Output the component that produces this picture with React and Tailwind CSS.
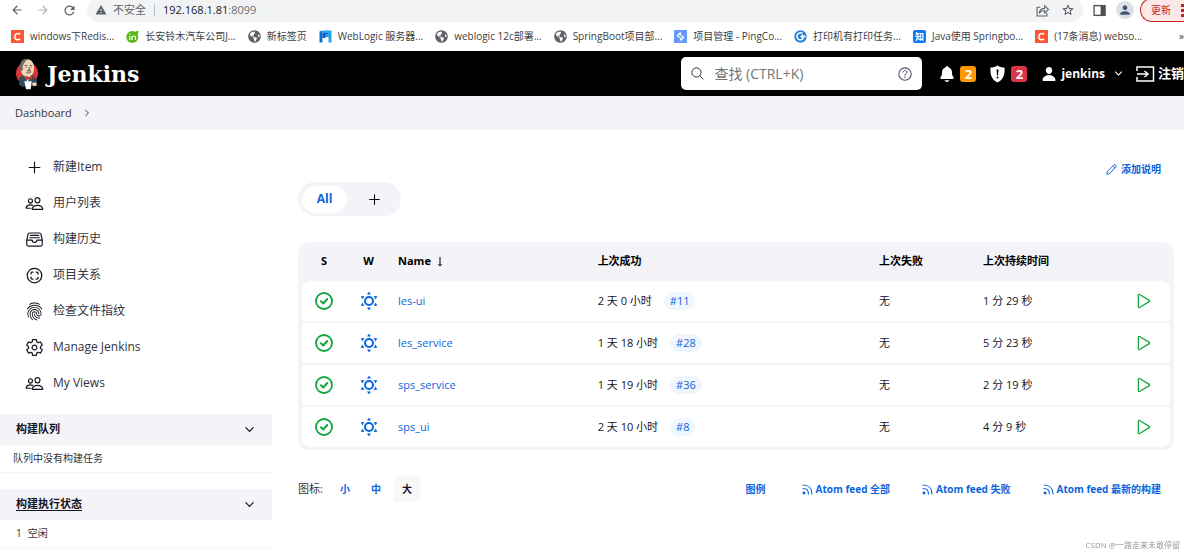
import React from 'react';
import {
  IoSearchOutline,
  IoHelpCircleOutline,
  IoNotifications,
  IoPerson,
  IoPeopleOutline,
  IoFileTrayFullOutline,
  IoFingerPrintOutline,
  IoSettingsOutline,
  IoPlayOutline,
  IoAddOutline,
  IoChevronDownOutline,
  IoChevronForwardOutline
} from 'react-icons/io5';
import {
  MdArrowBack,
  MdArrowForward,
  MdRefresh,
  MdWarning,
  MdStarBorder,
  MdPerson
} from 'react-icons/md';
import { FaGlobeAmericas } from 'react-icons/fa';

const CsdnIcon = () => (
  <svg viewBox="0 0 26 26" className="w-[13px] h-[13px] shrink-0">
    <rect width="26" height="26" fill="#fc5531" />
    <path d="M18.5 8.5C14 5.5 8 7.500 7.500 13.500s5 7.500 10.500 4.500" fill="none" stroke="#fff" strokeWidth="3" />
  </svg>
);

const GreenIcon = () => (
  <svg viewBox="0 0 26 26" className="w-[13px] h-[13px] shrink-0">
    <circle cx="12.500" cy="14" r="12" fill="#5cb81c" />
    <path d="M17 5Q20 2 25 1q1 5-3 9z" fill="#5cb81c" />
    <path d="M7.500 12v8M7.500 7.500v2M12 20v-8M12 15q1-3 4-3t3 3v5" fill="none" stroke="#fff" strokeWidth="2.400" />
  </svg>
);

const GlobeIcon = () => <FaGlobeAmericas className="w-[13px] h-[13px] shrink-0 text-[#5f6368]" />;

const FlagIcon = () => (
  <svg viewBox="0 0 26 26" className="w-[13px] h-[13px] shrink-0">
    <path d="M1 3l6-2v24H1z" fill="#1170cf" />
    <path d="M7 1h18v24h-6V14h-8V9h8V6H7z" fill="#21a7f0" />
    <path d="M7 6h12v3h-6v7H7z" fill="#0d5fc0" />
  </svg>
);

const PingIcon = () => (
  <svg viewBox="0 0 26 26" className="w-[13px] h-[13px] shrink-0">
    <rect width="26" height="26" rx="1" fill="#6698ff" />
    <path d="M13 5l-6 6 4 4M13 21l6-6-4-4M13 5v6M13 15v6" fill="none" stroke="#fff" strokeWidth="2.500" />
  </svg>
);

const PrintIcon = () => (
  <svg viewBox="0 0 26 26" className="w-[13px] h-[13px] shrink-0">
    <circle cx="13" cy="13" r="12.500" fill="#2b7fd8" />
    <path d="M17 7a7 7 0 1 0 2 9" fill="none" stroke="#fff" strokeWidth="3" />
    <path d="M12 13l6-5v3h5v4h-5v3z" fill="#fff" />
  </svg>
);

const ZhihuIcon = () => (
  <span className="w-[13px] h-[13px] shrink-0 rounded-xs bg-[#0e77fa] text-white text-[9px] leading-[13px] text-center font-bold">知</span>
);

const JenkinsLogo = () => (
  <svg viewBox="0 0 72 96" className="w-6 h-8 shrink-0">
    <ellipse cx="36" cy="46" rx="33" ry="34" fill="#d33833" />
    <path d="M14 58l14-6h22l14 8 3 18-12 6-34 2-9-6z" fill="#335061" />
    <path d="M28 50l9 22 12-20z" fill="#fff" />
    <path d="M18 24C14 44 24 56 38 56s20-12 19-28C56 12 48 4 36 4S20 12 18 24z" fill="#f0d6b7" />
    <path d="M36 3C22 2 14 12 15 30l4 10 5-4c-2-9 0-18 6-24q3-4 8-8z" fill="#6d6b6d" />
    <path d="M29 23q4-3 8 0M44 23q4-2 7 1M32 28h3M46 28h3M42 28l2 8-5 1M34 44q7 3 14-2" fill="none" stroke="#231f20" strokeWidth="2" />
    <path d="M36 37q7-3 13 1l-1 3q-6-2-12 0z" fill="#6d6b6d" />
    <path d="M32 54l10 4 10-5 1 12-10-3-10 4z" fill="#d33833" stroke="#7a1512" strokeWidth="1" />
    <path d="M28 70h22l-3 24H33z" fill="#fff" />
    <path d="M50 76q8-6 15-1l1 8-12 2z" fill="#f0d6b7" stroke="#231f20" strokeWidth="1" />
    <path d="M14 60l8 24M60 60l-6 12" stroke="#1d2f3a" strokeWidth="2" />
  </svg>
);

const ShareIcon = () => (
  <svg viewBox="0 0 24 24" className="w-[13px] h-[13px]" fill="none" stroke="#5f6368" strokeWidth="2">
    <path d="M8 6H2v16h18v-6" />
    <path d="M6 17c1-6 5-9 10-9V3l7 7-7 7v-5c-5 0-8 2-10 5z" strokeLinejoin="round" />
  </svg>
);

const PanelIcon = () => (
  <svg viewBox="0 0 24 24" className="w-[13px] h-[13px]">
    <rect x="2" y="3" width="20" height="18" fill="none" stroke="#4d5156" strokeWidth="2.500" />
    <path d="M14 2h9v20h-9z" fill="#4d5156" />
  </svg>
);

const ShieldIcon = () => (
  <svg viewBox="0 0 30 36" className="w-[15px] h-[18px]">
    <path d="M15 1c4 3 9 4 14 4 1 14-2 24-14 30C3 29 0 19 1 5c5 0 10-1 14-4z" fill="#fff" />
    <path d="M13 9h4l-1 12h-2z" fill="#000" />
    <circle cx="15" cy="25" r="2" fill="#000" />
  </svg>
);

const LogoutIcon = () => (
  <svg viewBox="0 0 38 32" className="w-[19px] h-4 shrink-0" fill="none" stroke="#fff" strokeWidth="3">
    <path d="M2 10V2h33v28H2v-8M2 16h22M17 10l7 6-7 6" />
  </svg>
);

const ProjectIcon = ({ className }) => (
  <svg viewBox="-2 -2 38 38" className={className} fill="none" stroke="currentColor" strokeWidth="2.500" strokeLinecap="round">
    <circle cx="17" cy="17" r="14.500" />
    <path d="M10 14v-2q0-2 2-2h2M20 10h2q2 0 2 2v2M24 20v2q0 2-2 2h-2M14 24h-2q-2 0-2-2v-2" />
  </svg>
);

const PencilIcon = () => (
  <svg viewBox="0 0 24 24" className="w-[11px] h-[11px]" fill="none" stroke="currentColor" strokeWidth="2" strokeLinejoin="round">
    <path d="M1.500 22.500l2-7L17 2q2-1.500 4 .5t.5 4L8.500 20.500zM15 4.500l4.500 4.500" />
  </svg>
);

const SortIcon = () => (
  <svg viewBox="0 0 12 20" className="w-1.5 h-2.5" fill="none" stroke="currentColor" strokeWidth="2">
    <path d="M6 0v18M2.500 14.500L6 18l3.500-3.500" />
  </svg>
);

const SuccessIcon = () => (
  <svg viewBox="0 0 36 36" className="w-[18px] h-[18px] mx-auto" fill="none" stroke="#13a540" role="img" aria-label="Success">
    <circle cx="18" cy="18" r="16" strokeWidth="3.600" />
    <path d="M12 18.500l4.500 4.500 8-9" strokeWidth="4" strokeLinecap="round" strokeLinejoin="round" />
  </svg>
);

const SunIcon = () => (
  <svg viewBox="0 0 36 36" className="w-[18px] h-[18px] mx-auto" fill="#0b65dc" role="img" aria-label="100%">
    <circle cx="18" cy="18" r="8" fill="none" stroke="#0b65dc" strokeWidth="4" />
    {[0, 60, 120, 180, 240, 300].map((angle) => (
      <path key={angle} d="M18 -1l4 6h-8z" transform={`rotate(${angle} 18 18)`} />
    ))}
  </svg>
);

const RssIcon = () => (
  <svg viewBox="0 0 22 22" className="w-[11px] h-[11px]" fill="none" stroke="currentColor" strokeWidth="2.200" strokeLinecap="round">
    <path d="M2 2c11 0 18 7 18 18M2 9c7 0 11 4 11 11" />
    <circle cx="4" cy="18" r="2" fill="currentColor" />
  </svg>
);

const bookmarks = [
  { icon: CsdnIcon, text: 'windows下Redis...' },
  { icon: GreenIcon, text: '长安铃木汽车公司J...' },
  { icon: GlobeIcon, text: '新标签页' },
  { icon: FlagIcon, text: 'WebLogic 服务器...' },
  { icon: GlobeIcon, text: 'weblogic 12c部署...' },
  { icon: GlobeIcon, text: 'SpringBoot项目部...' },
  { icon: PingIcon, text: '项目管理 - PingCo...' },
  { icon: PrintIcon, text: '打印机有打印任务...' },
  { icon: ZhihuIcon, text: 'Java使用 Springbo...' },
  { icon: CsdnIcon, text: '(17条消息) webso...' }
];

const tasks = [
  { icon: IoAddOutline, text: '新建Item' },
  { icon: IoPeopleOutline, text: '用户列表' },
  { icon: IoFileTrayFullOutline, text: '构建历史' },
  { icon: ProjectIcon, text: '项目关系' },
  { icon: IoFingerPrintOutline, text: '检查文件指纹' },
  { icon: IoSettingsOutline, text: 'Manage Jenkins' },
  { icon: IoPeopleOutline, text: 'My Views' }
];

const jobs = [
  { name: 'les-ui', success: '2 天 0 小时', build: '#11', failure: '无', duration: '1 分 29 秒' },
  { name: 'les_service', success: '1 天 18 小时', build: '#28', failure: '无', duration: '5 分 23 秒' },
  { name: 'sps_service', success: '1 天 19 小时', build: '#36', failure: '无', duration: '2 分 19 秒' },
  { name: 'sps_ui', success: '2 天 10 小时', build: '#8', failure: '无', duration: '4 分 9 秒' }
];

const feeds = ['Atom feed 全部', 'Atom feed 失败', 'Atom feed 最新的构建'];

const BrowserBar = () => (
  <div className="bg-white">
    <div className="flex items-end h-[22px] overflow-hidden">
      <div className="flex items-center w-full h-6 shrink-0">
        <div className="flex items-center gap-3 pl-2.5 pr-2.5 text-[#5f6368]">
          <button aria-label="Back"><MdArrowBack className="w-[14px] h-[14px]" /></button>
          <button aria-label="Forward"><MdArrowForward className="w-[14px] h-[14px] text-[#b4b6b9]" /></button>
          <button aria-label="Reload"><MdRefresh className="w-[15px] h-[15px]" /></button>
        </div>
        <div className="flex flex-1 items-center h-6 pl-2 pr-2 rounded-full bg-[#f1f3f4] text-[11px]">
          <MdWarning className="w-3 h-3 mr-1.5 text-[#5f6368]" />
          <span className="text-[#5f6368]">不安全</span>
          <span className="w-px h-3 mx-2 bg-[#bdc1c6]" />
          <span className="flex-1 text-[#202124]">192.168.1.81<span className="text-[#6b6f74]">:8099</span></span>
          <button aria-label="Share" className="mr-3"><ShareIcon /></button>
          <button aria-label="Bookmark"><MdStarBorder className="w-[14px] h-[14px] text-[#4d5156]" /></button>
        </div>
        <button aria-label="Side panel" className="ml-2.5"><PanelIcon /></button>
        <button aria-label="Profile" className="flex items-center justify-center w-[18px] h-[18px] ml-2.5 rounded-full bg-[#dde1e7] text-[#44546f]">
          <MdPerson className="w-[14px] h-[14px]" />
        </button>
        <button className="flex items-center h-6 w-[44px] shrink-0 ml-1.5 pl-2.5 rounded-l-full border border-r-0 border-[#c5221f] bg-[#fce8e6] text-[10px] text-[#c5221f]">
          更新
          <span className="flex flex-col gap-0.5 ml-auto">
            <span className="w-[3px] h-[3px] bg-[#c5221f]" />
            <span className="w-[3px] h-[3px] bg-[#c5221f]" />
            <span className="w-[3px] h-[3px] bg-[#c5221f]" />
          </span>
        </button>
      </div>
    </div>
    <div className="flex items-center gap-3 h-[29px] pl-[11px] text-[10px] text-[#3c4043] whitespace-nowrap">
      {bookmarks.map(({ icon: Icon, text }) => (
        <a key={text} href="#" className="flex items-center gap-1.5">
          <Icon />
          {text}
        </a>
      ))}
      <button aria-label="More bookmarks" className="ml-auto">»</button>
    </div>
  </div>
);

const Header = () => (
  <header className="flex items-center h-[45px] pl-[15px] bg-black text-white overflow-hidden whitespace-nowrap">
    <a href="#" className="flex items-center gap-2">
      <JenkinsLogo />
      <span className="font-['DejaVu_Serif',serif] text-[22px] leading-6 font-bold">Jenkins</span>
    </a>
    <label className="flex items-center w-[241px] h-[33px] ml-auto px-2 rounded-[5px] bg-white">
      <IoSearchOutline className="w-[17px] h-[15px] text-[#222]" />
      <input
        type="text"
        aria-label="查找"
        placeholder="查找 (CTRL+K)"
        className="flex-1 min-w-0 ml-2 text-[14px] text-[#333] placeholder:text-[#737373] outline-none"
      />
      <IoHelpCircleOutline className="w-[18px] h-[18px] text-[#555570]" />
    </label>
    <a href="#" className="flex items-center gap-1 ml-4">
      <IoNotifications className="w-[18px] h-[18px]" />
      <span className="w-4 h-4 rounded-[3px] bg-[#ff9800] text-[13px] leading-4 text-center font-bold">2</span>
    </a>
    <a href="#" className="flex items-center gap-1.5 ml-[14px]">
      <ShieldIcon />
      <span className="w-4 h-4 rounded-[3px] bg-[#dc3545] text-[13px] leading-4 text-center font-bold">2</span>
    </a>
    <button className="flex items-center ml-[14px] text-[12px] font-bold">
      <IoPerson className="w-4 h-4 mr-1" />
      jenkins
      <IoChevronDownOutline className="w-[11px] h-[11px] ml-2" />
    </button>
    <a href="#" className="flex items-center gap-[3px] ml-3 text-[13px] font-bold">
      <LogoutIcon />
      注销
    </a>
  </header>
);

const SidePane = ({ title, underlined, children }) => (
  <section>
    <div className="flex items-center justify-between h-[31px] pl-4 pr-4 bg-[#f3f3f8] text-[11px] font-bold text-[#14141f]">
      <h2 className={underlined ? 'underline underline-offset-2' : ''}>{title}</h2>
      <button aria-label="折叠"><IoChevronDownOutline className="w-[13px] h-[13px]" /></button>
    </div>
    <div className="flex items-center h-7 border-b border-[#f3f3f8] text-[10px] text-[#333340]">
      {children}
    </div>
  </section>
);

const Sidebar = () => (
  <aside className="w-[272px] shrink-0 pt-[19px]">
    <nav>
      {tasks.map(({ icon: Icon, text }) => (
        <a key={text} href="#" className="flex items-center gap-[9px] h-9 pl-[25px] text-[12px] text-[#333340]">
          <Icon className="w-[19px] h-[19px] text-[#14141f]" />
          {text}
        </a>
      ))}
    </nav>
    <div className="flex flex-col gap-4 pt-[13px]">
      <SidePane title="构建队列">
        <span className="pl-[13px]">队列中没有构建任务</span>
      </SidePane>
      <SidePane title="构建执行状态" underlined>
        <span className="pl-4">1</span>
        <a href="#" className="pl-1.5">空闲</a>
      </SidePane>
    </div>
  </aside>
);

const JobTable = () => (
  <div className="mt-[26px] px-1 pb-px rounded-[10px] bg-[#f3f3f8]">
    <table className="w-full table-fixed border-separate border-spacing-x-0 border-spacing-y-[2px] text-[11px] text-[#14141f] whitespace-nowrap">
      <colgroup>
        <col className="w-11" />
        <col className="w-[45px]" />
        <col className="w-[23%]" />
        <col />
        <col className="w-[104px]" />
        <col className="w-[142px]" />
        <col className="w-[52px]" />
      </colgroup>
      <thead>
        <tr className="h-[35px] text-left text-black">
          <th className="text-center">S</th>
          <th className="text-center">W</th>
          <th className="pl-[7px]">
            <button className="flex items-center gap-1.5 font-bold">
              Name
              <SortIcon />
            </button>
          </th>
          <th className="pl-[7px]">上次成功</th>
          <th className="pl-[7px]">上次失败</th>
          <th className="pl-[7px]">上次持续时间</th>
          <th></th>
        </tr>
      </thead>
      <tbody className="[&>tr:first-child>td:first-child]:rounded-tl-lg [&>tr:first-child>td:last-child]:rounded-tr-lg [&>tr:last-child>td:first-child]:rounded-bl-lg [&>tr:last-child>td:last-child]:rounded-br-lg">
        {jobs.map((job) => (
          <tr key={job.name} className="h-10 [&>td]:bg-white">
            <td className="rounded-l-xs"><SuccessIcon /></td>
            <td><SunIcon /></td>
            <td className="pl-[7px]"><a href="#" className="text-[#0b65dc]">{job.name}</a></td>
            <td className="pl-[7px]">
              <div className="flex items-center gap-3">
                {job.success}
                <a href="#" className="flex items-center h-[18px] px-1.5 rounded-full bg-[#f0f6fd] text-[#0b65dc]">{job.build}</a>
              </div>
            </td>
            <td className="pl-[7px]">{job.failure}</td>
            <td className="pl-[7px]">{job.duration}</td>
            <td className="rounded-r-xs">
              <button aria-label={`构建 ${job.name}`} className="block mx-auto text-[#13a540]">
                <IoPlayOutline className="w-5 h-5" />
              </button>
            </td>
          </tr>
        ))}
      </tbody>
    </table>
  </div>
);

const App = () => {
  return (
    <div className="min-h-screen bg-white font-['Open_Sans','Noto_Sans_CJK_SC',sans-serif]">
      <BrowserBar />
      <Header />
      <nav className="flex items-center gap-2.5 h-[34px] pl-[15px] bg-[#f3f3f8] text-[11px] text-[#333340]">
        <a href="#">Dashboard</a>
        <IoChevronForwardOutline className="w-[10px] h-[10px]" />
      </nav>

      <div className="flex">
        <Sidebar />
        <main className="flex-1 min-w-0 pl-[26px] pr-[10px] pt-[30px]">
          <div className="flex justify-end pr-[13px]">
            <a href="#" className="flex items-center gap-1 h-[18px] text-[10px] font-bold text-[#0b65dc]">
              <PencilIcon />
              添加说明
            </a>
          </div>

          <div className="flex items-center w-[103px] h-[34px] mt-1 p-1 rounded-full bg-[#f3f3f8] text-[12px]">
            <a href="#" className="flex items-center justify-center w-[45px] h-[27px] rounded-full bg-white font-bold text-[#0b65dc]">All</a>
            <a href="#" aria-label="新建视图" className="flex flex-1 justify-center pl-1"><IoAddOutline className="w-[17px] h-[17px]" /></a>
          </div>

          <JobTable />

          <div className="flex items-center mt-[26px] h-[26px] text-[10px] font-bold text-[#0b65dc] whitespace-nowrap">
            <span className="mr-[9px] text-[11px] font-normal text-[#333340]">图标:</span>
            <div className="flex gap-[5px]">
              <button className="w-[26px] h-[26px]">小</button>
              <button className="w-[26px] h-[26px]">中</button>
              <button className="w-[26px] h-[26px] rounded-xs bg-[#f8f8f8] text-[#14141f]">大</button>
            </div>
            <div className="flex items-center gap-8 ml-auto pr-[13px]">
              <a href="#" className="mr-1">图例</a>
              {feeds.map((feed) => (
                <a key={feed} href="#" className="flex items-center gap-[3px]">
                  <RssIcon />
                  {feed}
                </a>
              ))}
            </div>
          </div>
        </main>
      </div>

      <span className="fixed right-1 bottom-0 text-[8px] leading-[14px] text-[#9a9a9a]">CSDN @一路走来未敢停留</span>
    </div>
  );
};

export default App;
